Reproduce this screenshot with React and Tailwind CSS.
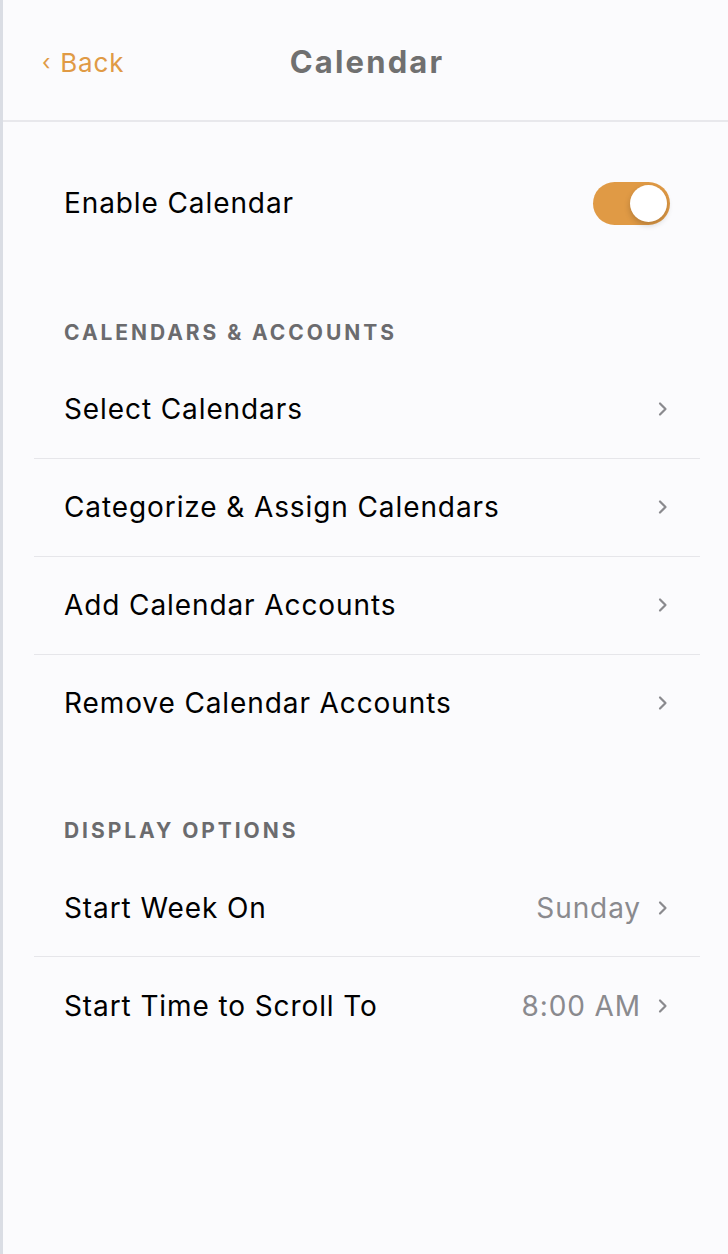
import React from "react";

const Chevron = ({ className = "" }) => (
  <svg
    className={className}
    width="11"
    height="16"
    viewBox="0 0 11 16"
    fill="none"
    stroke="currentColor"
    strokeWidth="2.2"
    strokeLinecap="round"
    strokeLinejoin="round"
  >
    <path d="M3 2.5 L8.5 8 L3 13.5" />
  </svg>
);

const SectionTitle = ({ children }) => (
  <div className="px-[61px] text-[21px] font-bold uppercase tracking-[0.14em] text-[#6b6b6e]">
    {children}
  </div>
);

const NavRow = ({ label, value, last }) => (
  <div className="ml-[31px] mr-[28px]">
    <div className="flex h-[97px] items-center justify-between pl-[30px] pr-[32px]">
      <span className="text-[28px] tracking-[0.9px] text-black">{label}</span>
      <span className="flex items-center gap-[16px] text-[#8a8a8e]">
        {value && <span className="text-[28px] tracking-[0.9px]">{value}</span>}
        <Chevron />
      </span>
    </div>
    {!last && <div className="h-px bg-[#e6e6ea]" />}
  </div>
);

const Toggle = ({ on }) => (
  <div
    className={`relative h-[43px] w-[77px] rounded-full ${
      on ? "bg-[#e09a45]" : "bg-[#e5e5ea]"
    }`}
  >
    <div
      className={`absolute top-[3px] h-[37px] w-[37px] rounded-full bg-white shadow-[0_3px_6px_rgba(0,0,0,0.2)] ${
        on ? "right-[3px]" : "left-[3px]"
      }`}
    />
  </div>
);

export default function App() {
  return (
    <div
      className="flex min-h-[1254px] w-[728px] flex-col border-l-[3px] border-[#dadde4] bg-[#fbfbfd]"
      style={{ fontFamily: "Inter, 'Noto Sans', sans-serif" }}
    >
      <header className="relative flex h-[122px] items-center border-b-2 border-[#e8e8ec] pt-[4px]">
        <button
          type="button"
          className="absolute left-[39px] flex items-center gap-[9px] text-[26px] tracking-[0.8px] text-[#e09a45]"
        >
          <span className="text-[22px] leading-none">‹</span>
          <span>Back</span>
        </button>
        <h1 className="mx-auto pl-[3px] text-[31px] font-bold tracking-[0.07em] text-[#707070]">
          Calendar
        </h1>
      </header>

      <div className="flex h-[162px] items-center justify-between pl-[61px] pr-[58px]">
        <span className="text-[28px] tracking-[0.9px] text-black">Enable Calendar</span>
        <Toggle on />
      </div>

      <div className="pt-[33px]">
        <SectionTitle>Calendars &amp; Accounts</SectionTitle>
      </div>
      <div className="mt-[12px]">
        <NavRow label="Select Calendars" />
        <NavRow label="Categorize & Assign Calendars" />
        <NavRow label="Add Calendar Accounts" />
        <NavRow label="Remove Calendar Accounts" last />
      </div>

      <div className="pt-[63px]">
        <SectionTitle>Display Options</SectionTitle>
      </div>
      <div className="mt-[13px]">
        <NavRow label="Start Week On" value="Sunday" />
        <NavRow label="Start Time to Scroll To" value="8:00 AM" last />
      </div>
    </div>
  );
}
